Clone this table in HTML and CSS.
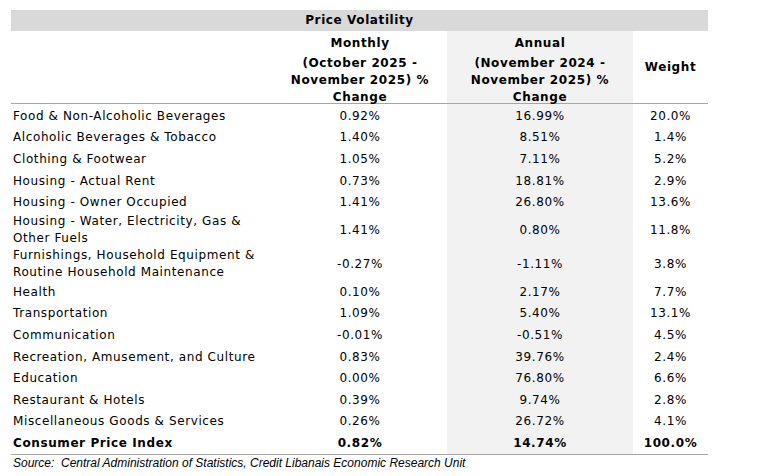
FILE: index.html
```html
<!DOCTYPE html>
<html>
<head>
<meta charset="utf-8">
<link rel="stylesheet" href="styles.css">
</head>
<body>
<div class="wrap">
<table class="pv">
  <colgroup>
    <col class="c-label"><col class="c-month"><col class="c-annual"><col class="c-weight">
  </colgroup>
  <thead>
    <tr class="title-row"><th colspan="4">Price Volatility</th></tr>
    <tr class="head-row">
      <th class="label"></th>
      <th class="top"><div class="h1">Monthly</div><div class="h2">(October 2025 -<br>November 2025) %<br>Change</div></th>
      <th class="top shade"><div class="h1">Annual</div><div class="h2">(November 2024 -<br>November 2025) %<br>Change</div></th>
      <th>Weight</th>
    </tr>
  </thead>
  <tbody>
    <tr class="first"><td class="label">Food &amp; Non-Alcoholic Beverages</td><td>0.92%</td><td class="shade">16.99%</td><td>20.0%</td></tr>
    <tr><td class="label">Alcoholic Beverages &amp; Tobacco</td><td>1.40%</td><td class="shade">8.51%</td><td>1.4%</td></tr>
    <tr><td class="label">Clothing &amp; Footwear</td><td>1.05%</td><td class="shade">7.11%</td><td>5.2%</td></tr>
    <tr><td class="label">Housing - Actual Rent</td><td>0.73%</td><td class="shade">18.81%</td><td>2.9%</td></tr>
    <tr><td class="label">Housing - Owner Occupied</td><td>1.41%</td><td class="shade">26.80%</td><td>13.6%</td></tr>
    <tr class="dbl"><td class="label">Housing - Water, Electricity, Gas &amp;<br>Other Fuels</td><td>1.41%</td><td class="shade">0.80%</td><td>11.8%</td></tr>
    <tr class="dbl"><td class="label">Furnishings, Household Equipment &amp;<br>Routine Household Maintenance</td><td>-0.27%</td><td class="shade">-1.11%</td><td>3.8%</td></tr>
    <tr><td class="label">Health</td><td>0.10%</td><td class="shade">2.17%</td><td>7.7%</td></tr>
    <tr><td class="label">Transportation</td><td>1.09%</td><td class="shade">5.40%</td><td>13.1%</td></tr>
    <tr><td class="label">Communication</td><td>-0.01%</td><td class="shade">-0.51%</td><td>4.5%</td></tr>
    <tr><td class="label">Recreation, Amusement, and Culture</td><td>0.83%</td><td class="shade">39.76%</td><td>2.4%</td></tr>
    <tr><td class="label">Education</td><td>0.00%</td><td class="shade">76.80%</td><td>6.6%</td></tr>
    <tr><td class="label">Restaurant &amp; Hotels</td><td>0.39%</td><td class="shade">9.74%</td><td>2.8%</td></tr>
    <tr><td class="label">Miscellaneous Goods &amp; Services</td><td>0.26%</td><td class="shade">26.72%</td><td>4.1%</td></tr>
    <tr class="total"><td class="label">Consumer Price Index</td><td>0.82%</td><td class="shade">14.74%</td><td>100.0%</td></tr>
  </tbody>
</table>
<p class="source">Source:&nbsp; Central Administration of Statistics, Credit Libanais Economic Research Unit</p>
</div>
</body>
</html>
```
FILE: styles.css
```css
html, body {
  margin: 0;
  padding: 0;
  background: #ffffff;
}
.wrap {
  padding: 10px 0 0 11px;
  font-family: "DejaVu Sans", Verdana, sans-serif;
  color: #000;
}
.pv {
  border-collapse: collapse;
  table-layout: fixed;
  width: 697px;
  font-size: 12px;
  letter-spacing: 0.6px;
}
.c-label { width: 262px; }
.c-month { width: 174px; }
.c-annual { width: 186px; }
.c-weight { width: 75px; }
.pv th, .pv td {
  padding: 0;
  text-align: center;
  vertical-align: middle;
  white-space: nowrap;
}
.title-row th {
  background: #d9d9d9;
  height: 21px;
  font-weight: bold;
  line-height: 21px;
}
.head-row th {
  height: 72px;
  font-weight: bold;
  border-bottom: 1.5px solid #a6a6a6;
}
.head-row th.top {
  vertical-align: top;
}
.h1 {
  padding-top: 3px;
  line-height: 19px;
}
.h2 {
  margin-top: 2px;
  margin-bottom: -5px;
  line-height: 17px;
}
.pv td {
  height: 21.6px;
  line-height: 15px;
}
.pv tr.first td {
  padding-top: 1.5px;
}
.pv td.label {
  text-align: left;
  padding-left: 2px;
}
.pv tr.dbl td {
  height: 33px;
}
.pv tr.dbl td.label {
  line-height: 17px;
}
.shade {
  background: #f2f2f2;
}
.total td {
  font-weight: bold;
  border-bottom: 1.5px solid #a6a6a6;
}
.source {
  margin: 1px 0 0 2px;
  font-family: "Liberation Sans", Arial, sans-serif;
  font-style: italic;
  font-size: 12px;
  line-height: 14px;
}
```
